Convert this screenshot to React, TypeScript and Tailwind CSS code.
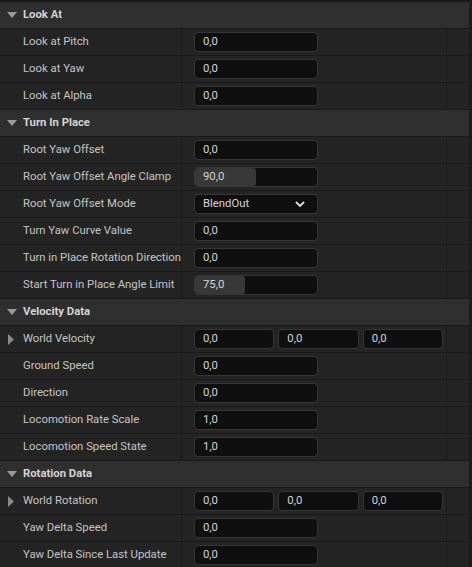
// Details panel: collapsible property categories, each row a label / value pair.

type Row =
  | { kind: "num"; label: string; value: string; fill?: number }
  | { kind: "enum"; label: string; value: string }
  | { kind: "vec"; label: string; values: string[] };

interface Category {
  title: string;
  rows: Row[];
}

const CATEGORIES: Category[] = [
  {
    title: "Look At",
    rows: [
      { kind: "num", label: "Look at Pitch", value: "0,0" },
      { kind: "num", label: "Look at Yaw", value: "0,0" },
      { kind: "num", label: "Look at Alpha", value: "0,0" },
    ],
  },
  {
    title: "Turn In Place",
    rows: [
      { kind: "num", label: "Root Yaw Offset", value: "0,0" },
      { kind: "num", label: "Root Yaw Offset Angle Clamp", value: "90,0", fill: 61 },
      { kind: "enum", label: "Root Yaw Offset Mode", value: "BlendOut" },
      { kind: "num", label: "Turn Yaw Curve Value", value: "0,0" },
      { kind: "num", label: "Turn in Place Rotation Direction", value: "0,0" },
      { kind: "num", label: "Start Turn in Place Angle Limit", value: "75,0", fill: 50 },
    ],
  },
  {
    title: "Velocity Data",
    rows: [
      { kind: "vec", label: "World Velocity", values: ["0,0", "0,0", "0,0"] },
      { kind: "num", label: "Ground Speed", value: "0,0" },
      { kind: "num", label: "Direction", value: "0,0" },
      { kind: "num", label: "Locomotion Rate Scale", value: "1,0" },
      { kind: "num", label: "Locomotion Speed State", value: "1,0" },
    ],
  },
  {
    title: "Rotation Data",
    rows: [
      { kind: "vec", label: "World Rotation", values: ["0,0", "0,0", "0,0"] },
      { kind: "num", label: "Yaw Delta Speed", value: "0,0" },
      { kind: "num", label: "Yaw Delta Since Last Update", value: "0,0" },
    ],
  },
];

function DownTriangle() {
  return (
    <svg width="10" height="6" viewBox="0 0 10 6" className="shrink-0">
      <path d="M0 0 L10 0 L5 6 Z" fill="#9a9a9a" />
    </svg>
  );
}

function RightTriangle() {
  return (
    <svg width="6" height="11" viewBox="0 0 6 11" className="shrink-0">
      <path d="M0 0 L6 5.5 L0 11 Z" fill="#8a8a8a" />
    </svg>
  );
}

function Chevron() {
  return (
    <svg width="10" height="7" viewBox="0 0 10 7">
      <path d="M1 1 L5 5 L9 1" stroke="#e0e0e0" strokeWidth="1.8" fill="none" />
    </svg>
  );
}

function NumBox({ value, fill, grow }: { value: string; fill?: number; grow?: boolean }) {
  return (
    <div
      className={
        "relative flex h-[20px] items-center overflow-hidden rounded-[4px] border border-[#363636] bg-[#0f0f0f] " +
        (grow ? "flex-1" : "w-[124px]")
      }
    >
      {fill !== undefined && (
        <div className="absolute inset-y-0 left-0 rounded-[3px] bg-[#383838]" style={{ width: fill }} />
      )}
      <span className="relative pl-[8px] text-[11.3px] text-[#d6d6d6]">{value}</span>
    </div>
  );
}

function ValueCell({ row }: { row: Row }) {
  if (row.kind === "vec") {
    return (
      <div className="flex w-[249px] gap-[4px]">
        {row.values.map((v, i) => (
          <NumBox key={i} value={v} grow />
        ))}
      </div>
    );
  }
  if (row.kind === "enum") {
    return (
      <div className="flex h-[20px] w-[124px] items-center justify-between rounded-[4px] border border-[#363636] bg-[#0f0f0f] pl-[8px] pr-[12px]">
        <span className="text-[11.3px] text-[#d6d6d6]">{row.value}</span>
        <Chevron />
      </div>
    );
  }
  return <NumBox value={row.value} fill={row.fill} />;
}

function PropertyRow({ row }: { row: Row }) {
  return (
    <div className="flex h-[27px] border-b border-[#1a1a1a] bg-[#242424]">
      <div className="flex w-[182px] shrink-0 items-center overflow-hidden border-r border-[#1a1a1a] pl-[8px]">
        <div className="flex w-[15px] shrink-0 items-center">{row.kind === "vec" && <RightTriangle />}</div>
        <span className="whitespace-nowrap text-[11.3px] text-[#c4c4c4]">{row.label}</span>
      </div>
      <div className="flex w-[265px] shrink-0 items-center border-r border-[#1a1a1a] pl-[12px]">
        <ValueCell row={row} />
      </div>
      <div className="flex-1" />
    </div>
  );
}

function CategoryHeader({ title }: { title: string }) {
  return (
    <div className="flex h-[27px] items-center border-b border-[#1a1a1a] bg-[#2f2f2f] pl-[7px]">
      <div className="flex w-[16px] items-center">
        <DownTriangle />
      </div>
      <span className="text-[11.3px] font-bold text-[#d4d4d4]">{title}</span>
    </div>
  );
}

export default function App() {
  return (
    <div
      className="flex h-[567px] w-[472px] overflow-hidden bg-[#1a1a1a]"
      style={{ fontFamily: "Roboto, 'Noto Sans', sans-serif" }}
    >
      <div className="w-[469px] pt-[2px]">
        {CATEGORIES.map((cat) => (
          <section key={cat.title}>
            <CategoryHeader title={cat.title} />
            {cat.rows.map((row) => (
              <PropertyRow key={row.label} row={row} />
            ))}
          </section>
        ))}
      </div>
      <div className="flex-1 bg-[#1c1c1c]" />
    </div>
  );
}
